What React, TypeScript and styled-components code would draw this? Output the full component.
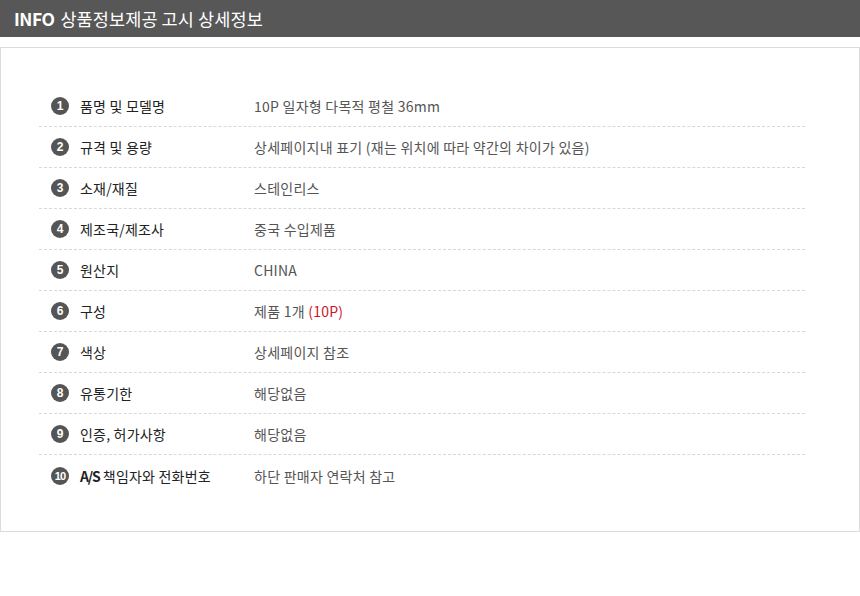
import React from 'react';
import styled, { createGlobalStyle } from 'styled-components';

const GlobalStyle = createGlobalStyle`
  body {
    margin: 0;
    background: #fff;
    font-family: "Noto Sans CJK KR", "Noto Sans", sans-serif;
  }
`;

const Page = styled.div`
  width: 860px;
`;

const TitleBar = styled.div`
  height: 37px;
  background: #575757;
  display: flex;
  align-items: center;
  padding-left: 14px;
  color: #fff;
  font-size: 17.5px;
  letter-spacing: 0.1px;
`;

const TitleStrong = styled.strong`
  font-weight: 700;
  margin-right: 6px;
  letter-spacing: -0.5px;
`;

const Box = styled.div`
  margin-top: 10px;
  border: 1px solid #dcdcdc;
  padding: 38px 54px 35px 38px;
`;

const List = styled.ul`
  list-style: none;
  margin: 0;
  padding: 0;
`;

const Row = styled.li`
  display: flex;
  align-items: center;
  height: 41px;
  border-bottom: 1px dashed #d8d8d8;
  box-sizing: border-box;
  &:last-child {
    border-bottom: none;
  }
`;

const Num = styled.span<{ $wide?: boolean }>`
  width: 18px;
  height: 18px;
  border-radius: 50%;
  background: #555;
  color: #fff;
  font-family: "Liberation Sans", Arial, sans-serif;
  font-weight: 700;
  font-size: ${(p) => (p.$wide ? '11px' : '12px')};
  letter-spacing: ${(p) => (p.$wide ? '-0.8px' : '0')};
  display: flex;
  align-items: center;
  justify-content: center;
  margin-left: 12px;
  flex-shrink: 0;
`;

const Label = styled.span`
  width: 174px;
  padding-left: 11px;
  font-size: 14px;
  color: #222;
  letter-spacing: 0.2px;
`;

const LabelStrong = styled.b`
  font-weight: 700;
  letter-spacing: -1.2px;
`;

const Value = styled.span`
  font-size: 14px;
  color: #555;
  letter-spacing: 0.25px;
`;

const Accent = styled.span`
  color: #c8182a;
`;

const rows: { label: React.ReactNode; value: React.ReactNode }[] = [
  { label: '품명 및 모델명', value: '10P 일자형 다목적 평철 36mm' },
  { label: '규격 및 용량', value: '상세페이지내 표기 (재는 위치에 따라 약간의 차이가 있음)' },
  { label: '소재/재질', value: '스테인리스' },
  { label: '제조국/제조사', value: '중국 수입제품' },
  { label: '원산지', value: 'CHINA' },
  { label: '구성', value: <>제품 1개 <Accent>(10P)</Accent></> },
  { label: '색상', value: '상세페이지 참조' },
  { label: '유통기한', value: '해당없음' },
  { label: '인증, 허가사항', value: '해당없음' },
  { label: <><LabelStrong>A/S</LabelStrong> 책임자와 전화번호</>, value: '하단 판매자 연락처 참고' },
];

export default function App() {
  return (
    <Page>
      <GlobalStyle />
      <TitleBar>
        <TitleStrong>INFO</TitleStrong>상품정보제공 고시 상세정보
      </TitleBar>
      <Box>
        <List>
          {rows.map((r, i) => (
            <Row key={i}>
              <Num $wide={i >= 9}>{i + 1}</Num>
              <Label>{r.label}</Label>
              <Value>{r.value}</Value>
            </Row>
          ))}
        </List>
      </Box>
    </Page>
  );
}
